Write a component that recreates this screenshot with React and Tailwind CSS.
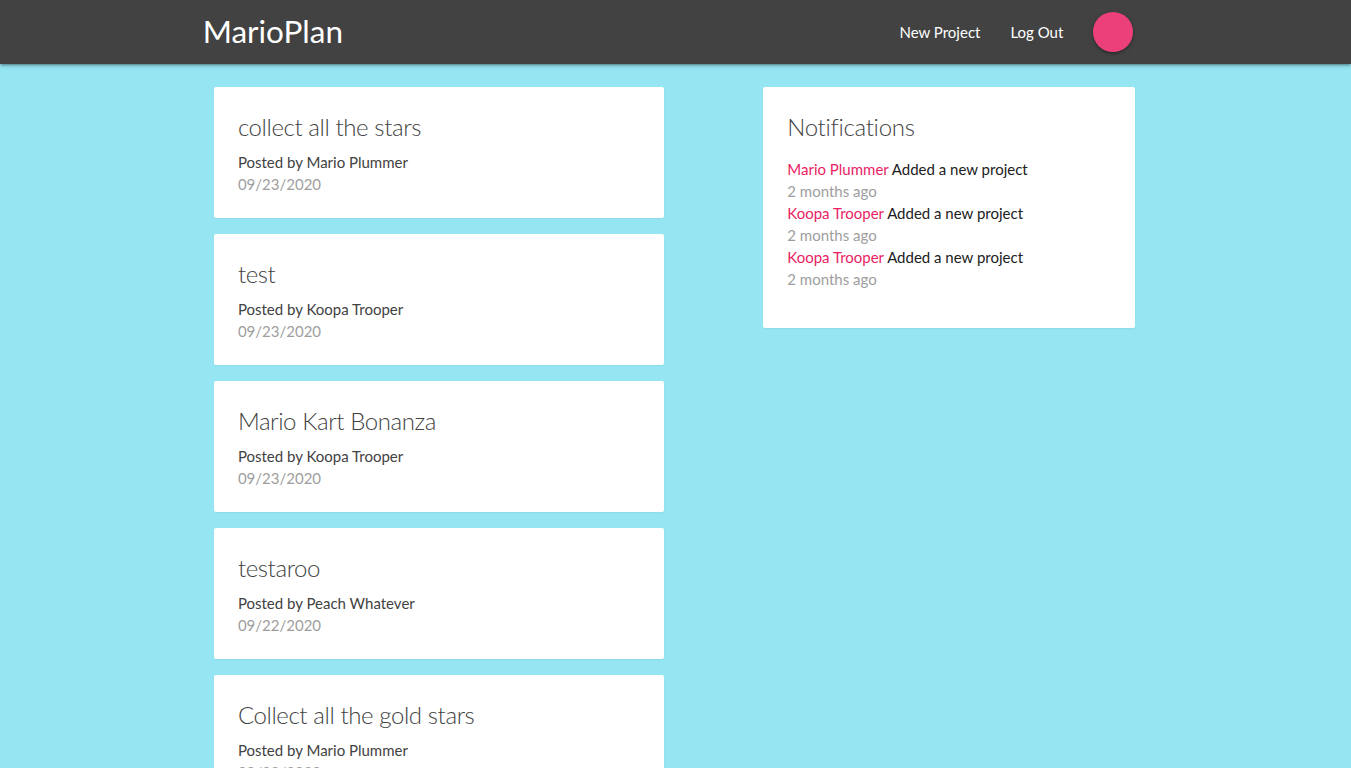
import React from 'react';

const projects = [
  { title: 'collect all the stars', author: 'Mario Plummer', date: '09/23/2020' },
  { title: 'test', author: 'Koopa Trooper', date: '09/23/2020' },
  { title: 'Mario Kart Bonanza', author: 'Koopa Trooper', date: '09/23/2020' },
  { title: 'testaroo', author: 'Peach Whatever', date: '09/22/2020' },
  { title: 'Collect all the gold stars', author: 'Mario Plummer', date: '09/22/2020' },
];

const notifications = [
  { user: 'Mario Plummer', content: 'Added a new project', time: '2 months ago' },
  { user: 'Koopa Trooper', content: 'Added a new project', time: '2 months ago' },
  { user: 'Koopa Trooper', content: 'Added a new project', time: '2 months ago' },
];

const navShadow =
  'shadow-[0_2px_2px_0_rgba(0,0,0,0.14),0_3px_1px_-2px_rgba(0,0,0,0.12),0_1px_5px_0_rgba(0,0,0,0.2)]';
// cards barely show a shadow in the shot
const cardShadow = 'shadow-[0_1px_2px_0_rgba(0,0,0,0.05)]';

function Navbar() {
  return (
    <nav className={`h-16 bg-[#424242] text-white relative z-10 ${navShadow}`}>
      <div className="w-[70%] mx-auto h-full flex items-center justify-between">
        <a href="#" className="text-[31.5px] leading-none">MarioPlan</a>
        <ul className="flex items-center h-full">
          <li><a href="#" className="px-[15px] text-[15px]">New Project</a></li>
          <li><a href="#" className="px-[15px] text-[15px]">Log Out</a></li>
          <li className="px-[15px]">
            <a href="#" className={`block w-10 h-10 rounded-full bg-[#ec407a] ${navShadow}`}></a>
          </li>
        </ul>
      </div>
    </nav>
  );
}

function ProjectSummary({ project }) {
  return (
    <div className={`bg-white rounded-[2px] px-6 pt-6 pb-[23px] ${cardShadow}`}>
      <span className="block text-2xl leading-8 font-light tracking-[-0.4px] text-[#424242] mb-2">
        {project.title}
      </span>
      <p className="text-[15px] leading-[22px] text-[#424242]">Posted by {project.author}</p>
      <p className="text-[15px] leading-[22px] text-[#9e9e9e]">{project.date}</p>
    </div>
  );
}

export default function App() {
  return (
    <div
      className="min-h-screen bg-[#95e6f2]"
      style={{ fontFamily: '"Segoe UI", Lato, "Open Sans", sans-serif' }}
    >
      <Navbar />
      <div className="w-[70%] mx-auto flex pt-[23px]">
        {/* project list */}
        <div className="w-1/2 px-[11.25px] flex flex-col gap-[16px]">
          {projects.map((p, i) => (
            <ProjectSummary key={i} project={p} />
          ))}
        </div>
        {/* notifications */}
        <div className="w-5/12 ml-[8.333%] pl-[9px] pr-[13px]">
          <div className={`bg-white rounded-[2px] p-6 ${cardShadow}`}>
            <span className="block text-2xl leading-8 font-light tracking-[-0.3px] text-[#424242]">
              Notifications
            </span>
            <ul className="my-[14.5px]">
              {notifications.map((n, i) => (
                <li key={i} className="text-[15px] leading-[22px]">
                  <span className="text-[#e91e63]">{n.user} </span>
                  <span className="text-[#212121]">{n.content}</span>
                  <div className="text-[#9e9e9e]">{n.time}</div>
                </li>
              ))}
            </ul>
          </div>
        </div>
      </div>
    </div>
  );
}
